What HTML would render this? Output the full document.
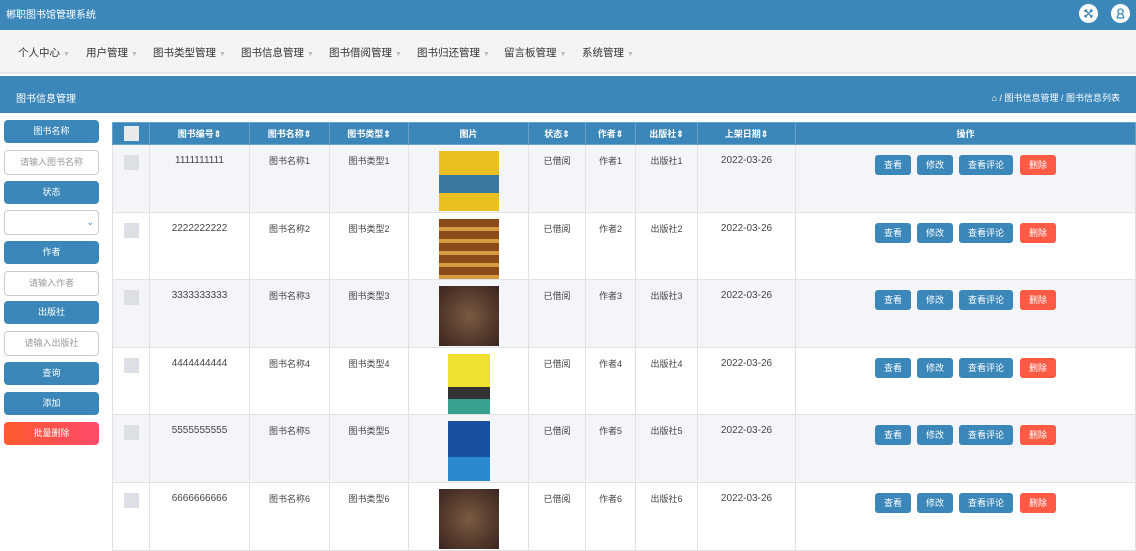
<!DOCTYPE html>
<html><head><meta charset="utf-8"><style>
*{box-sizing:border-box;margin:0;padding:0}
body{width:1136px;height:539px;overflow:hidden;background:#fff;font-family:"Liberation Sans","Noto Sans CJK SC",sans-serif;font-size:10px;color:#555;position:relative}
.top{position:absolute;left:0;top:0;width:1136px;height:30px;background:#3b87b9;color:#fff;font-size:10px}
.top .t{position:absolute;left:6px;top:6px}
.ic{position:absolute;top:4px;width:19px;height:19px;border-radius:50%;background:#fff}
.nav{position:absolute;left:0;top:30px;width:1136px;height:44px;background:#f4f4f4;border-bottom:2px solid #e4e6ea}
.nav span{position:absolute;top:15px;font-size:10.5px;color:#333}
.nav span i{font-style:normal;color:#bbb;font-size:7px;margin-left:3px}
.bar{position:absolute;left:0;top:76px;width:1136px;height:37px;background:#3b87b9;color:#fff}
.bar .l{position:absolute;left:16px;top:14px}
.bar .r{position:absolute;right:16px;top:15px;font-size:9px}
.sb{position:absolute;left:4px;width:95px;height:23px;border-radius:4px;background:#3b87b9;color:#fff;text-align:center;line-height:23px;font-size:9px}
.in{position:absolute;left:4px;width:95px;height:25px;border-radius:4px;border:1px solid #ccc;background:#fff;color:#999;text-align:center;line-height:23px;font-size:9px}
table{position:absolute;left:112px;top:122px;border-collapse:collapse;table-layout:fixed;width:1024px}
th{background:#3b87b9;color:#fff;height:22px;font-size:9px;border:1px solid #6aa3c9;font-weight:bold;padding:0}
td{height:67.6px;border:1px solid #e2e2e2;vertical-align:top;text-align:center;padding-top:10px;font-size:9px;color:#444;line-height:12px}
td:nth-child(2),td:nth-child(9){font-size:10px}
tr.g td{background:#f3f5f8}
.cb{display:inline-block;width:15px;height:15px;background:#dcdfe3}
th .cb{background:#e8eaec;vertical-align:middle}
.img{display:block;width:60px;height:60px;margin:-4px auto 0}
.b{display:inline-block;height:20px;line-height:20px;border-radius:3px;background:#3b87b9;color:#fff;font-size:9px;margin:0 2px;vertical-align:top}
.d{background:#ff5a44}
</style></head><body>
<div class="top"><span class="t">郴职图书馆管理系统</span>
<div class="ic" style="left:1079px"><svg width="19" height="19" viewBox="0 0 19 19" stroke="#3b87b9" stroke-width="1.3" fill="none"><path d="M6 6l7 7M13 6l-7 7M6 6h2M6 6v2M13 6h-2M13 6v2M6 13h2M6 13v-2M13 13h-2M13 13v-2"/></svg></div>
<div class="ic" style="left:1111px"><svg width="19" height="19" viewBox="0 0 19 19" stroke="#3b87b9" stroke-width="1.3" fill="none"><circle cx="9.5" cy="7.5" r="2.5"/><path d="M6 14h7M7.5 10l-1.5 4M11.5 10l1.5 4"/></svg></div>
</div>
<div class="nav">
<span style="left:18px">个人中心<i>▼</i></span><span style="left:86px">用户管理<i>▼</i></span><span style="left:153px">图书类型管理<i>▼</i></span><span style="left:241px">图书信息管理<i>▼</i></span><span style="left:329px">图书借阅管理<i>▼</i></span><span style="left:417px">图书归还管理<i>▼</i></span><span style="left:504px">留言板管理<i>▼</i></span><span style="left:582px">系统管理<i>▼</i></span>
</div>
<div class="bar"><span class="l">图书信息管理</span><span class="r">⌂ / 图书信息管理 / 图书信息列表</span></div>
<div class="sb" style="top:120px">图书名称</div>
<div class="in" style="top:150px">请输入图书名称</div>
<div class="sb" style="top:181px">状态</div>
<div class="in" style="top:210px;text-align:right;padding-right:4px;color:#3b87b9">⌄</div>
<div class="sb" style="top:241px">作者</div>
<div class="in" style="top:271px">请输入作者</div>
<div class="sb" style="top:301px">出版社</div>
<div class="in" style="top:331px">请输入出版社</div>
<div class="sb" style="top:362px">查询</div>
<div class="sb" style="top:392px">添加</div>
<div class="sb" style="top:422px;background:linear-gradient(90deg,#ff5a2e,#ff4a6a)">批量删除</div>
<table>
<colgroup><col style="width:37px"><col style="width:100px"><col style="width:80px"><col style="width:79px"><col style="width:120px"><col style="width:57px"><col style="width:50px"><col style="width:62px"><col style="width:98px"><col></colgroup>
<tr><th><span class="cb"></span></th><th>图书编号⇕</th><th>图书名称⇕</th><th>图书类型⇕</th><th>图片</th><th>状态⇕</th><th>作者⇕</th><th>出版社⇕</th><th>上架日期⇕</th><th>操作</th></tr>
<tr class="g"><td><span class="cb"></span></td><td>1111111111</td><td>图书名称1</td><td>图书类型1</td><td><span class="img" style="background:linear-gradient(#e8c020 0 40%,#3a7aa0 40% 70%,#e8c020 70%)"></span></td><td>已借阅</td><td>作者1</td><td>出版社1</td><td>2022-03-26</td><td><span class="b" style="width:36px">查看</span><span class="b" style="width:36px;margin-left:4px">修改</span><span class="b" style="width:54px;margin-left:4px">查看评论</span><span class="b d" style="width:36px;margin-left:5px">删除</span></td></tr>
<tr><td><span class="cb"></span></td><td>2222222222</td><td>图书名称2</td><td>图书类型2</td><td><span class="img" style="background:repeating-linear-gradient(#8a4a1a 0 8px,#d89a40 8px 12px)"></span></td><td>已借阅</td><td>作者2</td><td>出版社2</td><td>2022-03-26</td><td><span class="b" style="width:36px">查看</span><span class="b" style="width:36px;margin-left:4px">修改</span><span class="b" style="width:54px;margin-left:4px">查看评论</span><span class="b d" style="width:36px;margin-left:5px">删除</span></td></tr>
<tr class="g"><td><span class="cb"></span></td><td>3333333333</td><td>图书名称3</td><td>图书类型3</td><td><span class="img" style="background:radial-gradient(#7a5a40,#3a2420)"></span></td><td>已借阅</td><td>作者3</td><td>出版社3</td><td>2022-03-26</td><td><span class="b" style="width:36px">查看</span><span class="b" style="width:36px;margin-left:4px">修改</span><span class="b" style="width:54px;margin-left:4px">查看评论</span><span class="b d" style="width:36px;margin-left:5px">删除</span></td></tr>
<tr><td><span class="cb"></span></td><td>4444444444</td><td>图书名称4</td><td>图书类型4</td><td><span class="img" style="width:42px;background:linear-gradient(#f0e030 0 55%,#333 55% 75%,#3aa090 75%)"></span></td><td>已借阅</td><td>作者4</td><td>出版社4</td><td>2022-03-26</td><td><span class="b" style="width:36px">查看</span><span class="b" style="width:36px;margin-left:4px">修改</span><span class="b" style="width:54px;margin-left:4px">查看评论</span><span class="b d" style="width:36px;margin-left:5px">删除</span></td></tr>
<tr class="g"><td><span class="cb"></span></td><td>5555555555</td><td>图书名称5</td><td>图书类型5</td><td><span class="img" style="width:42px;background:linear-gradient(#1a50a0 0 60%,#2a8acd 60%)"></span></td><td>已借阅</td><td>作者5</td><td>出版社5</td><td>2022-03-26</td><td><span class="b" style="width:36px">查看</span><span class="b" style="width:36px;margin-left:4px">修改</span><span class="b" style="width:54px;margin-left:4px">查看评论</span><span class="b d" style="width:36px;margin-left:5px">删除</span></td></tr>
<tr><td><span class="cb"></span></td><td>6666666666</td><td>图书名称6</td><td>图书类型6</td><td><span class="img" style="background:radial-gradient(#7a5a40,#3a2420)"></span></td><td>已借阅</td><td>作者6</td><td>出版社6</td><td>2022-03-26</td><td><span class="b" style="width:36px">查看</span><span class="b" style="width:36px;margin-left:4px">修改</span><span class="b" style="width:54px;margin-left:4px">查看评论</span><span class="b d" style="width:36px;margin-left:5px">删除</span></td></tr>
</table>
</body></html>
